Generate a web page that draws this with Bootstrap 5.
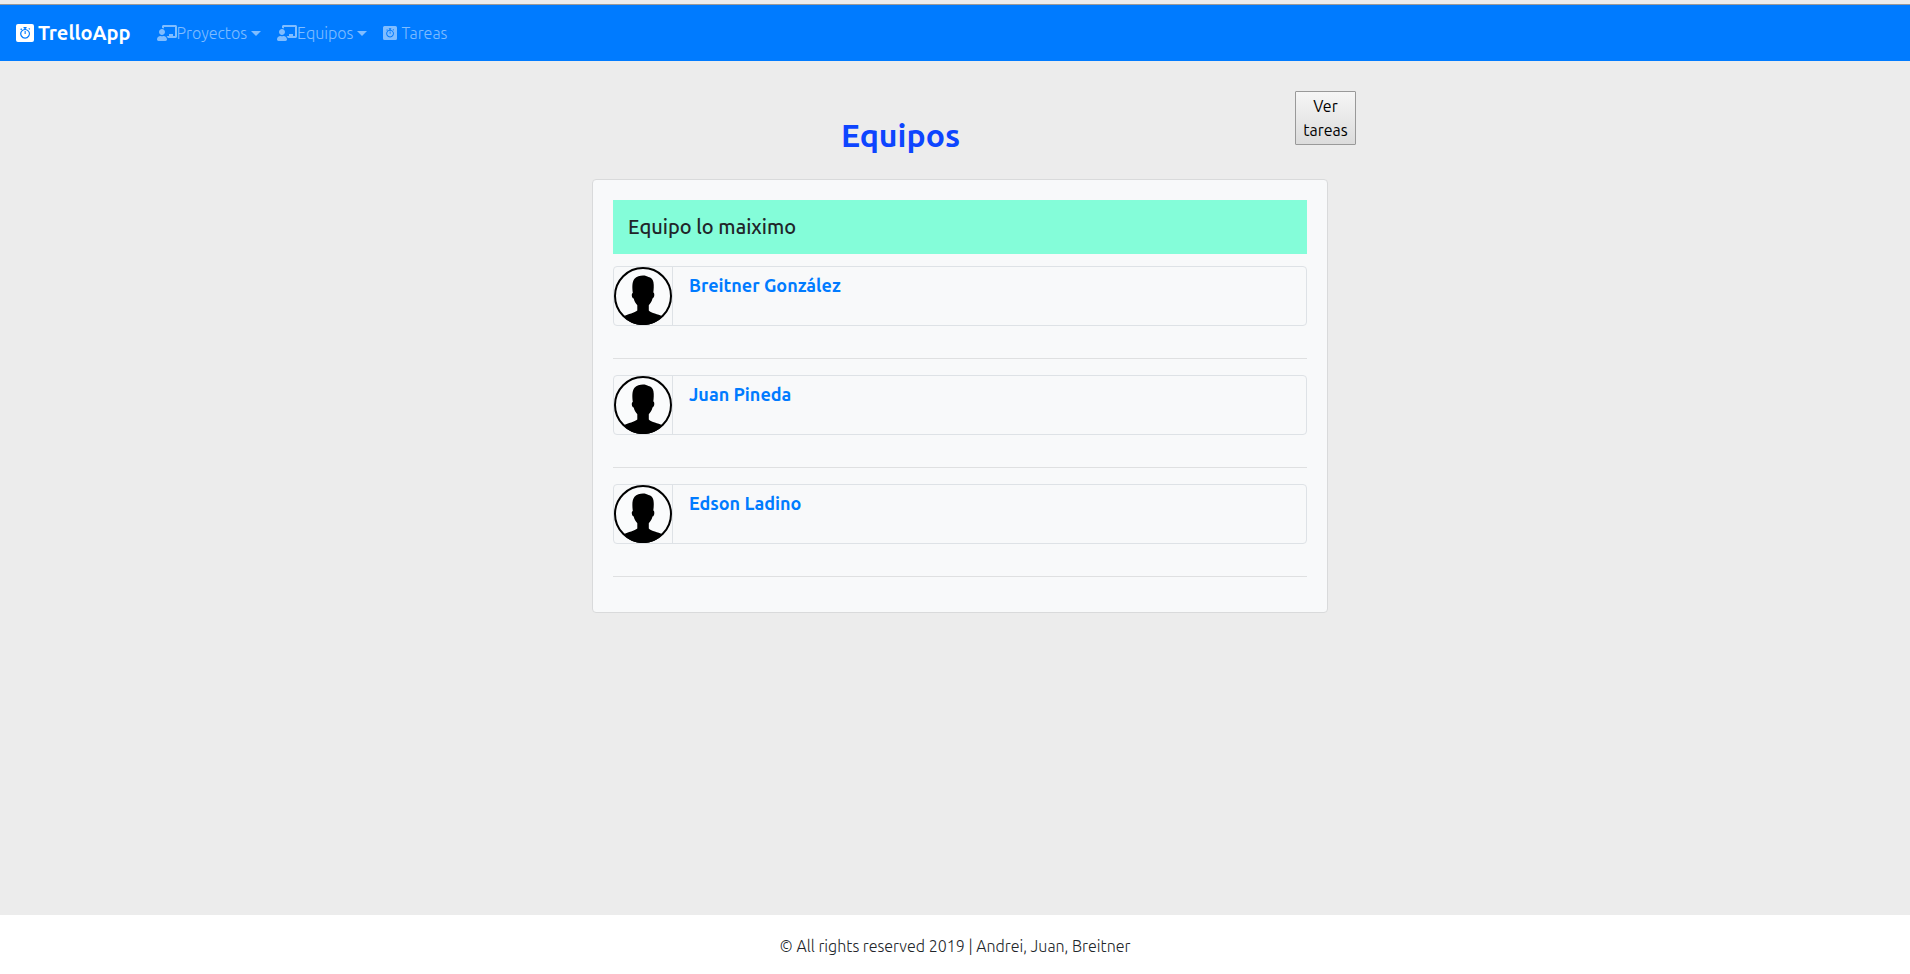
<!DOCTYPE html>
<html lang="es">
<head>
<meta charset="utf-8">
<meta name="viewport" content="width=device-width, initial-scale=1">
<title>TrelloApp - Equipos</title>
<link href="https://cdn.jsdelivr.net/npm/bootstrap@5.3.0/dist/css/bootstrap.min.css" rel="stylesheet">
<style>
  body { font-family: Ubuntu, "Noto Sans", sans-serif; font-weight: 300; background: #ececec; color: #212529; }
  .app-nav { background: #007bff; border-top: 1px solid #999; margin-top: 4px; min-height: 57px; padding: 8px 16px; }
  .app-nav .navbar-brand { font-size: 20px; font-weight: 700; line-height: 30px; padding: 5px 0; margin-right: 18px; color: #fff; }
  .app-nav .nav-link { font-size: 16px; line-height: 24px; color: rgba(255,255,255,.5); display: flex; align-items: center; }
  .app-nav .dropdown-toggle::after { margin-left: 4px; border-width: 5px 5px 0; }
  .brand-mark { width: 18px; height: 18px; margin-right: 4px; }
  .task-mark { width: 14px; height: 14px; margin-right: 4px; }
  .team-mark { width: 20px; height: 16px; }
  .page-col { width: 100%; max-width: 746px; padding-left: 10px; margin: 0 auto; }
  .page-head { margin: 30px -28px 25px 0; }
  .page-title { font-size: 32px; font-weight: 600; line-height: 38px; color: #0d45ff; padding: 25px 86px 0 0; }
  .old-button { width: 61px; height: 54px; padding: 0; font-size: 16px; font-weight: 400; line-height: 24px; color: #000; border: 1px solid #999; border-radius: 1px; background: linear-gradient(#f6f6f6, #dcdcdc); }
  .team-card { background: #f8f9fa; border: 1px solid #d9dadb; border-radius: 4px; padding: 20px 20px 19px; }
  .team-name { background: #84fdd9; font-size: 20px; font-weight: 500; line-height: 24px; padding: 15px; margin: 0 0 12px; }
  .member { height: 60px; border: 1px solid #dee2e6; border-radius: 4px; }
  .avatar-cell { width: 59px; border-right: 1px solid #dee2e6; }
  .avatar { width: 58px; height: 58px; display: block; }
  .member-link { font-size: 18px; font-weight: 700; line-height: 22px; color: #007bff; text-decoration: none; padding: 7px 16px; }
  .split { margin: 32px 0 16px; border-top: 1px solid #dfe0e1; opacity: 1; }
  .app-foot { background: #fff; font-size: 16px; line-height: 24px; padding: 19px 16px 16px; }
</style>
</head>
<body class="d-flex flex-column min-vh-100">
<svg class="d-none" aria-hidden="true">
  <symbol id="watch" viewBox="0 0 18 18">
    <path fill="currentColor" fill-rule="evenodd" d="M2 0h14a2 2 0 0 1 2 2v14a2 2 0 0 1-2 2H2a2 2 0 0 1-2-2V2a2 2 0 0 1 2-2zM7.500 3v1.200h.8v.7a4.900 4.900 0 1 0 1.500 0v-.7h.8V3zM9.100 6a3.700 3.700 0 1 1-.01 0zM8.600 7v3h1.100V7zM4.200 5.300l1-1 1 .9-1 1zM12.400 4.800l.8-.8 1 1-.8.8z"/>
  </symbol>
  <symbol id="team" viewBox="0 0 640 512">
    <path fill="currentColor" d="M208 352c-2.390 0-4.780.35-7.060 1.090C187.980 357.300 174.350 360 160 360c-14.350 0-27.980-2.700-40.950-6.910-2.280-.74-4.660-1.090-7.050-1.090C49.940 352-.33 402.480 0 464.620.14 490.880 21.730 512 48 512h224c26.270 0 47.860-21.120 48-47.380.33-62.140-49.940-112.620-112-112.620zm-48-32c53.020 0 96-42.980 96-96s-42.980-96-96-96-96 42.980-96 96 42.980 96 96 96zM592 0H208c-26.470 0-48 22.250-48 49.590V96c23.420 0 45.100 6.780 64 17.800V64h352v288h-64v-64H384v64h-76.240c19.100 16.690 33.120 38.730 39.690 64H592c26.470 0 48-22.250 48-49.590V49.590C640 22.250 618.470 0 592 0z"/>
  </symbol>
  <symbol id="person" viewBox="0 0 58 58">
    <circle cx="29" cy="29" r="28" fill="#fafbfc"/>
    <path d="M18.800 26c-.7-6-.8-11 1.700-14.200C22.500 9.300 26 8.400 29 8.400c2.200 0 4.200.6 5.500 1.500 2.300.3 4.300 2.200 4.900 5.100.7 3.500.3 7.500-.1 10.600 1.600.4 1.300 5.300-.8 6-.6 2.700-2.100 5.100-3.700 6.700v5.200c2.500 3 9.200 3.200 13.700 5.900C44 54.500 37 58 29 58S14 54.500 9.600 49.400c4.500-2.600 11.200-3.400 13.700-5.900v-5.200c-1.600-1.600-3-4-3.600-6.700-2.200-.8-2.500-5.300-.9-5.600z"/>
    <circle cx="29" cy="29" r="28" fill="none" stroke="#000" stroke-width="2"/>
  </symbol>
</svg>

<nav class="navbar navbar-expand app-nav">
  <a class="navbar-brand d-flex align-items-center" href="#"><svg class="brand-mark" aria-hidden="true"><use href="#watch"/></svg>TrelloApp</a>
  <ul class="navbar-nav">
    <li class="nav-item dropdown"><a class="nav-link dropdown-toggle" href="#" role="button" data-bs-toggle="dropdown" aria-expanded="false"><svg class="team-mark" aria-hidden="true"><use href="#team"/></svg>Proyectos</a></li>
    <li class="nav-item dropdown"><a class="nav-link dropdown-toggle" href="#" role="button" data-bs-toggle="dropdown" aria-expanded="false"><svg class="team-mark" aria-hidden="true"><use href="#team"/></svg>Equipos</a></li>
    <li class="nav-item"><a class="nav-link" href="#"><svg class="task-mark" aria-hidden="true"><use href="#watch"/></svg>Tareas</a></li>
  </ul>
</nav>

<main class="page-col">
  <header class="page-head d-flex align-items-start">
    <h1 class="page-title flex-grow-1 text-center mb-0">Equipos</h1>
    <button type="button" class="old-button">Ver tareas</button>
  </header>
  <section class="team-card">
    <h2 class="team-name">Equipo lo maiximo</h2>
    <div class="member d-flex align-items-start">
      <div class="avatar-cell"><svg class="avatar" aria-hidden="true"><use href="#person"/></svg></div>
      <a class="member-link" href="#">Breitner González</a>
    </div>
    <hr class="split">
    <div class="member d-flex align-items-start">
      <div class="avatar-cell"><svg class="avatar" aria-hidden="true"><use href="#person"/></svg></div>
      <a class="member-link" href="#">Juan Pineda</a>
    </div>
    <hr class="split">
    <div class="member d-flex align-items-start">
      <div class="avatar-cell"><svg class="avatar" aria-hidden="true"><use href="#person"/></svg></div>
      <a class="member-link" href="#">Edson Ladino</a>
    </div>
    <hr class="split">
  </section>
</main>

<footer class="app-foot text-center mt-auto">© All rights reserved 2019 | Andrei, Juan, Breitner</footer>
<script src="https://cdn.jsdelivr.net/npm/bootstrap@5.3.0/dist/js/bootstrap.bundle.min.js"></script>
</body>
</html>
